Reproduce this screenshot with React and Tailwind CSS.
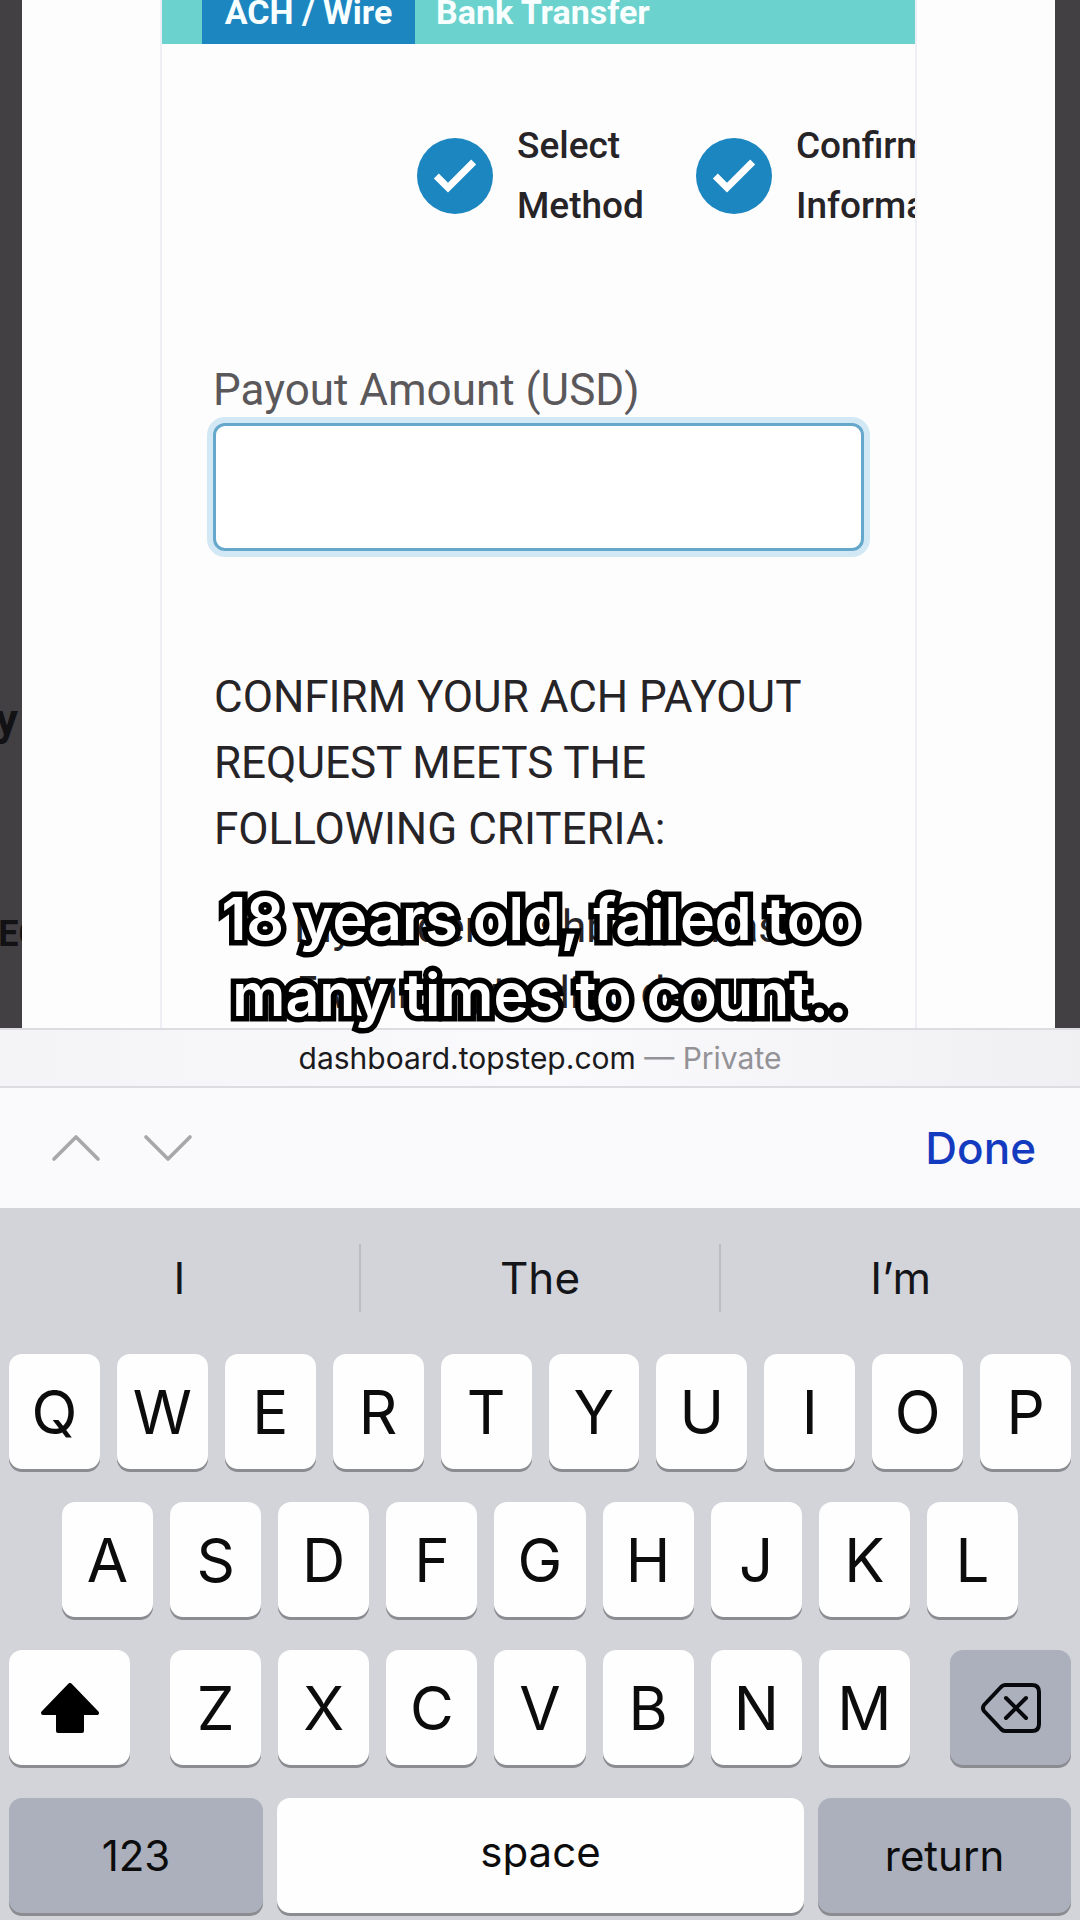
import { useState } from "react";
import { Check, ChevronDown, ChevronUp } from "lucide-react";

const steps = [
  ["Select", "Method"],
  ["Confirm", "Information"],
];

const keyBase =
  "flex h-[115px] items-center justify-center rounded-[13px] shadow-[0_3px_0_#8b8c91]";
const keyLight = "bg-[#fefefe] text-[#0c0c0d]";
const keyDark = "bg-[#abb0bc] text-[#0c0c0d]";

function LetterKey({ letter, onPress }) {
  return (
    <button
      type="button"
      className={`${keyBase} ${keyLight} min-w-0 flex-1 text-[60px]`}
      onClick={() => onPress(letter)}
    >
      {letter}
    </button>
  );
}

function PayoutForm({ amount, setAmount }) {
  return (
    <main className="flex min-w-0 flex-1 flex-col overflow-hidden border-x-2 border-[#eeeff5] font-[Roboto,sans-serif]">
      {/* Tabs */}
      <div className="flex h-11 shrink-0 items-end bg-[#6bd2cd] pl-10 text-[34px] leading-[64px] font-bold whitespace-nowrap text-[#f8ffff]">
        <button type="button" className="w-[213px] bg-[#1c86c0]">
          ACH / Wire
        </button>
        <button type="button" className="px-[21px]">Bank Transfer</button>
      </div>

      {/* Steps */}
      <ol className="mt-[72px] flex shrink-0 gap-[52px] pl-[255px]">
        {steps.map(([first, second]) => (
          <li key={first} className="flex shrink-0 items-center gap-6">
            <span className="flex size-[76px] items-center justify-center rounded-full bg-[#1c86c0] text-white">
              <Check className="size-14" strokeWidth={3} strokeLinecap="butt" strokeLinejoin="miter" />
            </span>
            <span className="text-[37px] leading-[60px] font-medium text-[#262427]">
              {first}
              <br />
              {second}
            </span>
          </li>
        ))}
      </ol>

      {/* Amount */}
      <div className="mt-[121px] flex flex-col px-[51px]">
        <label htmlFor="amount" className="text-[44px] leading-[66px] text-[#5b585b]">
          Payout Amount (USD)
        </label>
        <input
          id="amount"
          inputMode="decimal"
          value={amount}
          onChange={(e) => setAmount(e.target.value)}
          className="h-[128px] rounded-[12px] border-[3px] border-[#66a8cc] bg-white px-6 text-[44px] ring-[6px] ring-[#d2e8f4] outline-none"
        />
      </div>

      <div className="mt-[113px] px-[52px] text-[44px] leading-[66px] text-[#262427]">
        <h2>CONFIRM YOUR ACH PAYOUT REQUEST MEETS THE FOLLOWING CRITERIA:</h2>
        <ul className="mt-8 pr-[60px] pl-20">
          <li>My trader dashboard has 5 winning trading days</li>
        </ul>
      </div>
    </main>
  );
}

function Keyboard({ onPress, onDelete }) {
  const [shift, setShift] = useState(true);
  const row = (letters) =>
    letters.split("").map((l) => (
      <LetterKey key={l} letter={shift ? l : l.toLowerCase()} onPress={onPress} />
    ));

  return (
    <section aria-label="Keyboard" className="bg-[#d3d4da] pb-1.5">
      {/* Suggestions */}
      <div className="mb-1.5 flex h-[140px] items-center text-[44px] text-[#141519]">
        <button type="button" className="h-[68px] flex-1">I</button>
        <button type="button" className="h-[68px] flex-1 border-x-2 border-[#bdbec4]">The</button>
        <button type="button" className="h-[68px] flex-1">I’m</button>
      </div>

      <div className="flex flex-col gap-[33px] px-[9px]">
        <div className="flex gap-[17px]">{row("QWERTYUIOP")}</div>
        <div className="flex gap-[17px] px-[53px]">{row("ASDFGHJKL")}</div>
        <div className="flex gap-10">
          <button
            type="button"
            aria-label="Shift"
            className={`${keyBase} ${keyLight} w-[121px]`}
            onClick={() => setShift((v) => !v)}
          >
            <svg viewBox="0 0 58 50" className="h-[50px] w-[58px]" fill="black" stroke="black" strokeWidth="4" strokeLinejoin="round">
              <path d="M29 2 L56 30 H41 V48 H17 V30 H2 Z" />
            </svg>
          </button>
          <div className="flex flex-1 gap-[17px]">{row("ZXCVBNM")}</div>
          <button
            type="button"
            aria-label="Delete"
            className={`${keyBase} ${keyDark} w-[121px]`}
            onClick={onDelete}
          >
            <svg viewBox="0 0 60 50" className="h-[50px] w-[60px]" fill="none" stroke="#08090c" strokeWidth="4" strokeLinecap="round" strokeLinejoin="round">
              <path d="M24 2 H51 Q58 2 58 9 V41 Q58 48 51 48 H24 Q22 48 20 46 L3 28 Q1 25 3 22 L20 4 Q22 2 24 2 Z" />
              <path d="M25 15 L45 35 M45 15 L25 35" />
            </svg>
          </button>
        </div>
        <div className="flex gap-[14px] text-[42px]">
          <button type="button" className={`${keyBase} ${keyDark} w-[254px]`}>123</button>
          <button type="button" className={`${keyBase} ${keyLight} flex-1 pb-2`} onClick={() => onPress(" ")}>
            space
          </button>
          <button type="button" className={`${keyBase} ${keyDark} w-[253px]`}>return</button>
        </div>
      </div>
    </section>
  );
}

export default function App() {
  const [amount, setAmount] = useState("");

  return (
    <div className="flex min-h-screen flex-col bg-[#d3d4da] font-[Inter,sans-serif]">
      {/* Page behind the modal shows at both edges */}
      <div className="flex h-[1028px] overflow-hidden bg-[#434044]">
        <div className="flex w-[22px] shrink-0 flex-col items-end overflow-hidden pt-[694px] font-[Roboto,sans-serif] text-[#121113]">
          <span className="pr-1 text-[44px] leading-[52px] font-bold">y</span>
          <span className="-mr-5 mt-[164px] text-[36px] leading-[48px] font-bold">EC</span>
        </div>
        <div className="flex min-w-0 flex-1 bg-[#fefdfe] px-[138px]">
          <PayoutForm amount={amount} setAmount={setAmount} />
        </div>
        <div className="w-[25px] shrink-0" />
      </div>

      {/* Address bar */}
      <div className="relative flex h-[60px] items-center justify-center border-y-2 border-[#dddce0] bg-linear-to-r from-[#f4f3f6] via-[#faf9fc] to-[#f0eff2] text-[30px] text-[#1b1a1c]">
        <p>
          dashboard.topstep.com <span className="text-[#939296]">— Private</span>
        </p>
        {/* Video caption */}
        <p className="absolute inset-x-0 bottom-[53px] text-center text-[59px] leading-[76px] font-semibold text-white [-webkit-text-stroke:11px_black] [paint-order:stroke_fill] [stroke-linejoin:round]">
          18 years old, failed too
          <br />
          many times to count..
        </p>
      </div>

      <div className="flex h-[120px] items-center gap-1 bg-[#faf9fc] pr-11 pl-8 text-[#a8a7a9]">
        <button type="button" aria-label="Previous field">
          <ChevronUp className="size-[88px]" strokeWidth={1} />
        </button>
        <button type="button" aria-label="Next field">
          <ChevronDown className="size-[88px]" strokeWidth={1} />
        </button>
        <button type="button" className="ml-auto text-[44px] font-medium text-[#143bbf]">
          Done
        </button>
      </div>

      <Keyboard
        onPress={(c) => setAmount((v) => v + c)}
        onDelete={() => setAmount((v) => v.slice(0, -1))}
      />
    </div>
  );
}
